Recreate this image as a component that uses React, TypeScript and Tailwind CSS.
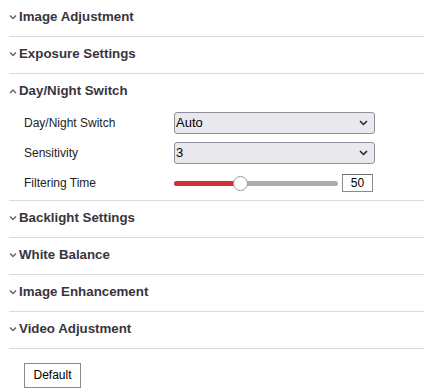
import { useState } from 'react';

const sections = [
  'Image Adjustment',
  'Exposure Settings',
  'Day/Night Switch',
  'Backlight Settings',
  'White Balance',
  'Image Enhancement',
  'Video Adjustment',
];

function Chevron({ open }: { open: boolean }) {
  return (
    <svg width="8" height="6" viewBox="0 0 8 6" className="mr-[2px]">
      {open
        ? <path d="M1 5 L4 2 L7 5" fill="none" stroke="#666" strokeWidth="1.5" />
        : <path d="M1 1.5 L4 4.5 L7 1.5" fill="none" stroke="#666" strokeWidth="1.5" />}
    </svg>
  );
}

function SelectBox({ value, options }: { value: string, options: string[] }) {
  return (
    <div className="relative w-[201px] h-[22px]">
      <select
        defaultValue={value}
        className="appearance-none w-full h-full pl-[1px] bg-[#e9e9ed] border border-[#8f8f9d] rounded-[3px] text-[13px] text-black outline-none"
      >
        {options.map(o => <option key={o}>{o}</option>)}
      </select>
      <svg width="9" height="6" viewBox="0 0 9 6" className="absolute right-[7px] top-[8px] pointer-events-none">
        <path d="M1 1 L4.5 4.5 L8 1" fill="none" stroke="#222" strokeWidth="1.5" />
      </svg>
    </div>
  );
}

function DayNight() {
  return (
    <div className="pt-[2px] pb-[6px] pl-[15px] flex flex-col gap-[8px] text-[12px] text-[#222]">
      <div className="flex items-center h-[22px]">
        <span className="w-[150px]">Day/Night Switch</span>
        <SelectBox value="Auto" options={['Day', 'Night', 'Auto', 'Scheduled-Switch']} />
      </div>
      <div className="flex items-center h-[22px]">
        <span className="w-[150px]">Sensitivity</span>
        <SelectBox value="3" options={['1', '2', '3', '4', '5', '6', '7']} />
      </div>
      <div className="flex items-center h-[22px]">
        <span className="w-[150px]">Filtering Time</span>
        <div className="relative w-[164px] h-[5px] rounded-full bg-[#acacac]">
          <div className="h-full w-[64px] rounded-full bg-[#d0313a]" />
          <div className="absolute left-[59px] top-[-5px] w-[15px] h-[15px] rounded-full bg-white border border-[#9a9a9a]" />
        </div>
        <div className="ml-[4px] w-[31px] h-[18px] border border-[#8a8a8a] border-t-[#6f6f6f] flex items-center justify-center text-[12px] text-black">
          50
        </div>
      </div>
    </div>
  );
}

export default function App() {
  const [open] = useState('Day/Night Switch');

  return (
    <div className="w-[430px] h-[389px] bg-white font-['Liberation_Sans',Arial,sans-serif] overflow-hidden">
      <div className="ml-[9px] w-[415px]">
        {sections.map(title => (
          <div key={title} className="border-b border-[#d9d9d9]">
            <div className="h-[36px] pb-[3px] flex items-center">
              <Chevron open={title === open} />
              <span className="text-[13.3px] font-bold text-[#3a3440]">{title}</span>
            </div>
            {title === open && <DayNight />}
          </div>
        ))}
        <div className="pt-[13px] pl-[15px]">
          <button className="w-[57px] h-[25px] border border-[#8a8a8a] bg-white text-[12px] text-black">
            Default
          </button>
        </div>
      </div>
    </div>
  );
}
